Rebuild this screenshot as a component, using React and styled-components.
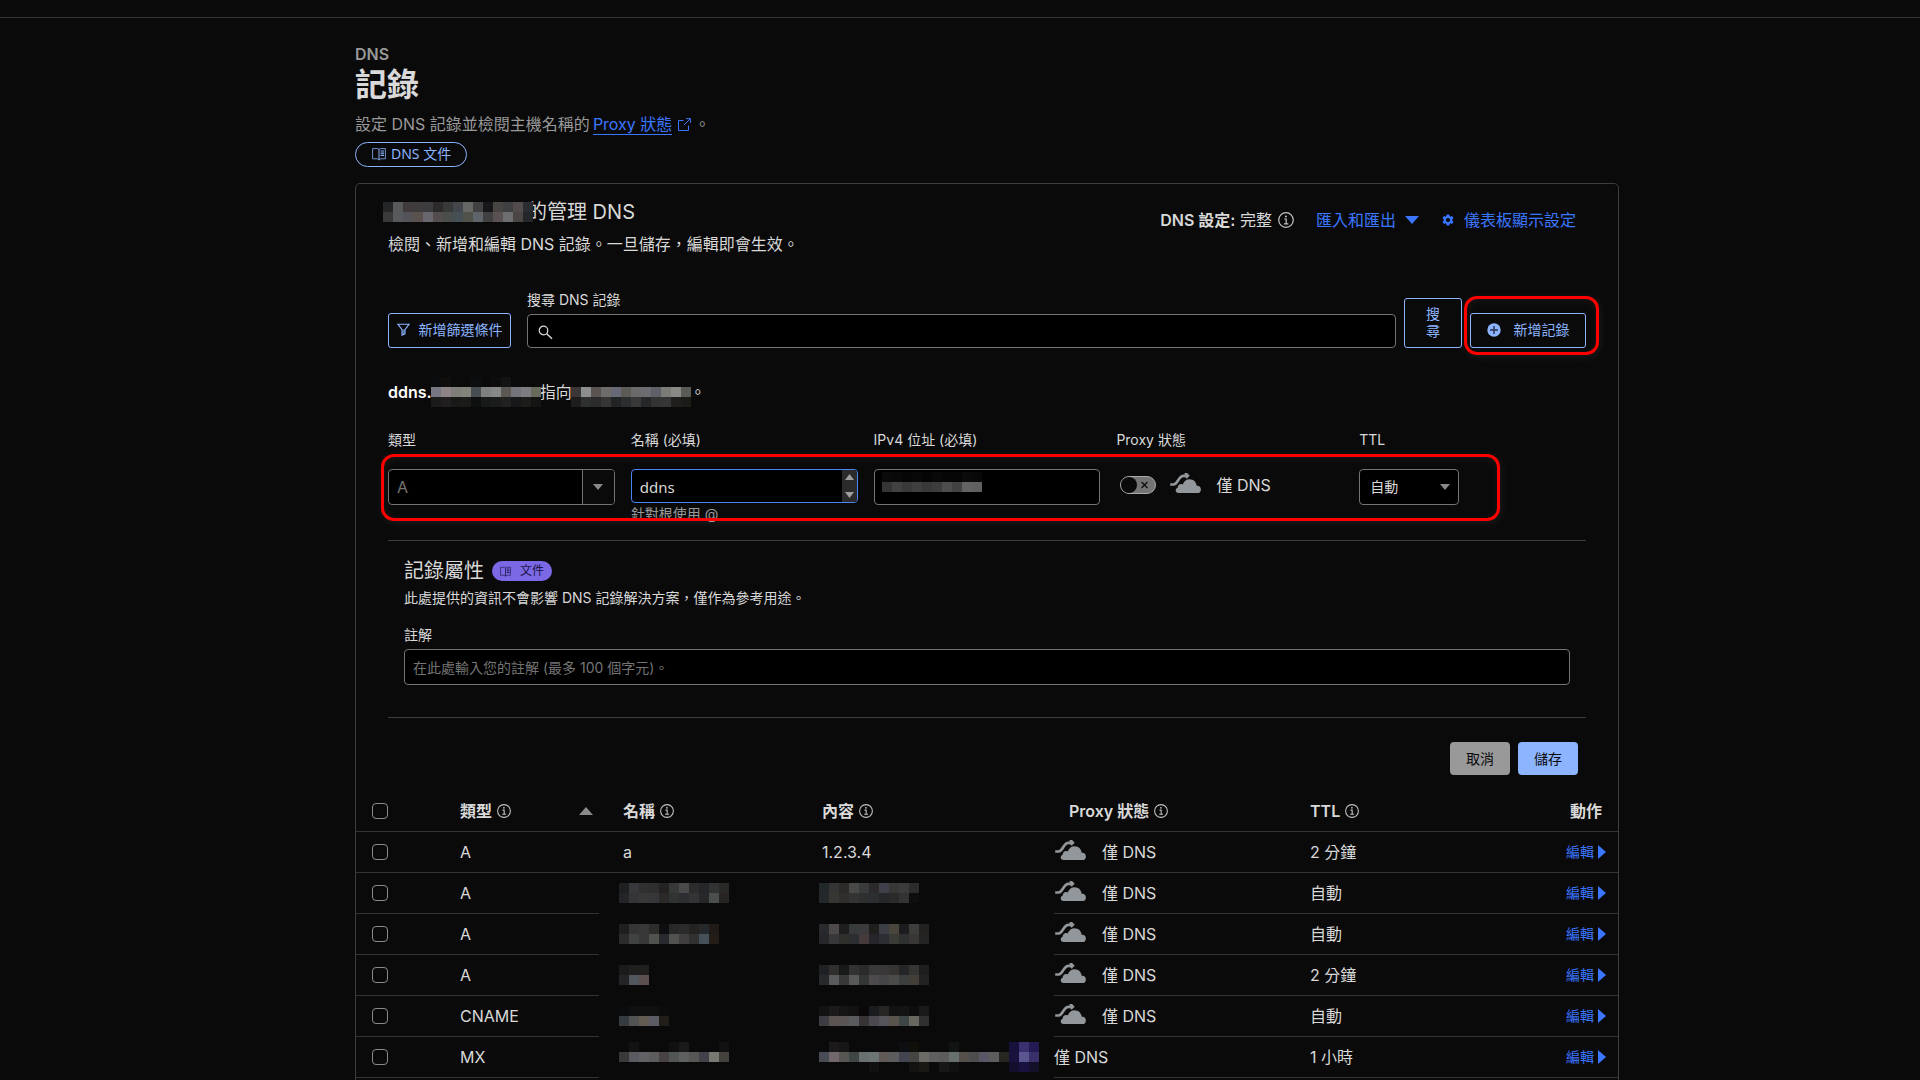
import React, { useState } from "react";
import styled, { createGlobalStyle } from "styled-components";
import { MdSettings } from "react-icons/md";

const SANS = `Inter, "Noto Sans CJK TC", sans-serif`;
const UI = `"Noto Sans", "Noto Sans CJK TC", sans-serif`;

const GlobalStyle = createGlobalStyle`
  *, *::before, *::after { box-sizing: border-box; }
  html { scrollbar-width: none; }
  body {
    margin: 0;
    background: #0a0a0a;
    color: #d9d9d9;
    font: 400 16px/24px ${SANS};
  }
  h1, h2, h3, p { margin: 0; }
  button, input, textarea, select { font: inherit; color: inherit; margin: 0; }
  svg { display: block; flex: none; }
`;

/* ---------- layout ---------- */

const TopBar = styled.header`
  height: 18px;
  border-bottom: 1px solid #333;
`;

const Page = styled.main`
  padding: 26px 0 40px 54px;
`;

const Content = styled.div`
  max-width: 1264px;
  margin: 0 auto;
`;

const Card = styled.section`
  margin-top: 16px;
  padding-bottom: 32px;
  border: 1px solid #3d3d3d;
  border-radius: 5px;
`;

const CardBody = styled.div`
  padding: 16px 32px 0;
`;

const Row = styled.div`
  display: flex;
  align-items: center;
  gap: ${p => p.$gap || 0}px;
`;

const Divider = styled.hr`
  height: 1px;
  margin: 0;
  border: 0;
  background: #3d3d3d;
`;

/* ---------- page heading ---------- */

const Eyebrow = styled.p`
  color: #999;
  font-weight: 600;
  line-height: 20px;
`;

const Title = styled.h1`
  font-size: 32px;
  font-weight: 700;
  line-height: 42px;
`;

const Lead = styled.p`
  display: flex;
  align-items: center;
  margin: 6px 0;
  color: #999;
`;

const LeadLink = styled.a`
  display: flex;
  align-items: center;
  gap: 6px;
  margin: 0 3px;
  color: #3b76ff;
  text-decoration: none;

  span {
    line-height: 20px;
    border-bottom: 1px solid;
  }
`;

const DocsLink = styled.a`
  display: flex;
  align-items: center;
  gap: 5px;
  width: fit-content;
  height: 25px;
  padding: 0 15px 2px 16px;
  border: 1px solid #8cb4ff;
  border-radius: 13px;
  color: #8cb4ff;
  font: 14px/20px ${UI};
  text-decoration: none;
`;

/* ---------- card header ---------- */

const CardHeader = styled.div`
  display: flex;
  justify-content: space-between;
  align-items: flex-start;
`;

const CardTitle = styled.h2`
  display: flex;
  align-items: center;
  margin-bottom: 8px;
  font-size: 20px;
  font-weight: 400;
  line-height: 24px;

  svg {
    position: relative;
    margin: 0 -6px 0 -5px;
  }
`;

const HeaderTools = styled.div`
  display: flex;
  align-items: center;
  gap: 22px;
  padding: 8px 10px 0 0;
`;

const Setup = styled.span`
  display: flex;
  align-items: center;
  gap: 6px;

  b {
    font-weight: 600;
  }
`;

const LinkButton = styled.button`
  display: flex;
  align-items: center;
  gap: 9px;
  padding: 0;
  border: 0;
  background: none;
  color: #3b76ff;
  cursor: pointer;
`;

/* ---------- controls ---------- */

const OutlineButton = styled.button`
  display: flex;
  align-items: center;
  justify-content: center;
  flex: none;
  gap: ${p => p.$gap || 0}px;
  width: ${p => p.$width}px;
  height: ${p => (p.$tall ? 50 : 35)}px;
  padding: ${p => (p.$tall ? "0 20px 2px" : "0 0 2px")};
  border: 1px solid #8cb4ff;
  border-radius: 3px;
  background: none;
  color: #8cb4ff;
  font-size: 14px;
  line-height: 17px;
  cursor: pointer;
`;

const SolidButton = styled.button`
  width: 60px;
  height: 33px;
  padding: 0;
  border: 0;
  border-radius: 4px;
  background: ${p => (p.$primary ? "#8cb4ff" : "#999")};
  color: #0a0a0a;
  font-size: 14px;
  line-height: 20px;
  cursor: pointer;
`;

const Label = styled.label`
  display: block;
  font-size: 14px;
  line-height: 20px;
`;

const Box = styled.div`
  display: flex;
  align-items: center;
  position: relative;
  height: ${p => p.$height || 36}px;
  border: 1px solid ${p => (p.$focused ? "#4d82f3" : "#747474")};
  border-radius: 4px;
  background: #000;
  overflow: hidden;
`;

const SearchBox = styled(Box)`
  height: 34px;
  padding: 3px 0 0 10px;
`;

const CommentBox = styled(Box)`
  margin-top: 4px;
`;

const Input = styled.input`
  flex: 1;
  min-width: 0;
  height: 100%;
  padding: 0 8px;
  border: 0;
  outline: 0;
  background: none;
  font-size: ${p => p.$size || 14}px;

  &::placeholder {
    color: #747474;
    opacity: 1;
  }

  &:disabled {
    color: #747474;
  }
`;

const NameArea = styled.textarea`
  flex: 1;
  min-width: 0;
  height: 32px;
  padding: 5px 8px;
  border: 0;
  outline: 0;
  resize: none;
  overflow: hidden;
  background: none;
  font: 15px/24px ${UI};
`;

const Steps = styled.div`
  display: flex;
  flex-direction: column;
  align-items: center;
  justify-content: space-between;
  width: 15px;
  height: 100%;
  padding: 4px 0;
  background: #2b2b2b;
`;

const ComboButton = styled.button`
  display: flex;
  align-items: center;
  justify-content: center;
  width: 32px;
  height: 100%;
  padding: 0;
  border: 0;
  border-left: 1px solid #747474;
  background: #0a0a0a;
`;

const SelectBox = styled(Box)`
  width: 100px;
  padding-right: 8px;
`;

const Select = styled.select`
  flex: 1;
  min-width: 0;
  height: 100%;
  padding: 0 10px;
  border: 0;
  outline: 0;
  appearance: none;
  background: none;
  font-size: 14px;
`;

const Toggle = styled.label`
  display: flex;
  align-items: center;
  justify-content: flex-end;
  position: relative;
  width: 36px;
  height: 18px;
  padding-right: 7px;
  border: 1px solid #aaa;
  border-radius: 9px;
  background: #747474;

  input {
    position: absolute;
    inset: 0;
    opacity: 0;
  }

  &::before {
    content: "";
    position: absolute;
    left: 0;
    width: 16px;
    height: 16px;
    border-radius: 50%;
    background: #0a0a0a;
  }
`;

const Check = styled.input`
  display: block;
  appearance: none;
  width: 16px;
  height: 16px;
  border: 1px solid #8a8a8a;
  border-radius: 4px;
`;

/* Covers the typed value of the box it sits in */
const Cover = styled.div`
  position: absolute;
  top: 2px;
  left: 7px;
`;

/* Red marker drawn over the controls it points out */
const Marker = styled.div`
  position: absolute;
  inset: ${p => p.$inset};
  border: 3px solid #f00;
  border-radius: 13px;
  box-shadow: 1px 2px 8px rgba(255, 255, 255, 0.08),
    inset 1px 2px 8px rgba(255, 255, 255, 0.06);
  pointer-events: none;
`;

/* ---------- search ---------- */

const SearchRow = styled.form`
  display: flex;
  align-items: flex-end;
  gap: 8px;
  margin-top: 34px;
`;

const SearchField = styled.div`
  flex: 1;
  margin-left: 8px;

  label {
    margin-bottom: 4px;
  }
`;

const Marked = styled.div`
  position: relative;
`;

/* ---------- record form ---------- */

const Summary = styled.p`
  display: flex;
  align-items: center;
  height: 30px;
  margin-top: 29px;

  b {
    color: #fff;
    font-weight: 600;
  }

  svg {
    position: relative;
    margin: 0 -1px;
  }
`;

const Fields = styled.div`
  position: relative;
  display: grid;
  grid-template-columns: repeat(5, minmax(0, 1fr));
  gap: 16px;
  height: 95px;
  margin: 23px 0 15px;
`;

const Field = styled.div`
  & > label:first-child,
  & > p:first-child {
    margin-bottom: 19px;
  }
`;

const FieldName = styled.p`
  font-size: 14px;
  line-height: 20px;
`;

const Hint = styled.p`
  color: #999;
  font-size: 14px;
  line-height: 22px;
`;

const ProxyCell = styled.div`
  display: flex;
  align-items: center;
  height: 32px;
  padding-left: 4px;
  gap: 14px;
`;

const Attributes = styled.div`
  padding: 16px 16px 32px;
`;

const SubTitle = styled.h3`
  font-size: 20px;
  font-weight: 400;
  line-height: 28px;
`;

const DocsBadge = styled.a`
  display: flex;
  align-items: center;
  gap: 9px;
  height: 20px;
  padding: 0 8px;
  border-radius: 10px;
  background: #7b68e4;
  color: #1c1547;
  font-size: 12px;
  line-height: 20px;
  text-decoration: none;
`;

const SubText = styled.p`
  margin-bottom: 14px;
  font-size: 14px;
  line-height: 26px;
`;

const Actions = styled.div`
  display: flex;
  justify-content: flex-end;
  gap: 8px;
  padding: 24px 8px 16px 0;
`;

/* ---------- table ---------- */

const Table = styled.table`
  width: 100%;
  table-layout: fixed;
  border-spacing: 0;
`;

const Col = styled.col`
  width: ${p => p.$width};
`;

const Cell = styled.td`
  height: 41px;
  padding: 0 0 0 ${p => p.$left || 0}px;
  border-bottom: 1px solid ${p => (p.$plain ? "transparent" : "#333")};
  text-align: left;
  vertical-align: middle;
  font-weight: 400;
  white-space: nowrap;
`;

const HeadLabel = styled.span`
  display: flex;
  align-items: center;
  gap: 5px;
  font-weight: 600;
`;

const HeadSort = styled.div`
  display: flex;
  align-items: center;
  justify-content: space-between;
  padding-right: 6px;
`;

const HeadEnd = styled(HeadLabel)`
  justify-content: flex-end;
  padding-right: 16px;
`;

const EditButton = styled.button`
  display: flex;
  align-items: center;
  gap: 4px;
  margin-left: auto;
  padding: 0 12px 0 0;
  border: 0;
  background: none;
  color: #3b76ff;
  font-size: 14px;
  cursor: pointer;
`;

/* ---------- icons ---------- */

const Triangle = ({ dir = "down", w = 12, h = 7, color = "#8a8a8a" }) => {
  const points = {
    down: `0,0 ${w},0 ${w / 2},${h}`,
    up: `0,${h} ${w},${h} ${w / 2},0`,
    right: `0,0 ${w},${h / 2} 0,${h}`
  };
  return (
    <svg width={w} height={h} aria-hidden="true">
      <polygon points={points[dir]} fill={color} />
    </svg>
  );
};

const InfoIcon = ({ size = 14 }) => (
  <svg width={size} height={size} viewBox="0 0 16 16" fill="none" stroke="#c4c4c4" aria-hidden="true">
    <circle cx="8" cy="8" r="7.3" strokeWidth="1.2" />
    <path d="M6.3 7h1.9v4.6M6 11.8h4.3" strokeWidth="1.2" />
    <circle cx="7.9" cy="4.4" r="1" fill="#c4c4c4" stroke="none" />
  </svg>
);

const ExternalIcon = () => (
  <svg width="13" height="13" viewBox="0 0 13 13" fill="none" stroke="currentColor" aria-hidden="true">
    <path d="M5.5 2.5h-5v10h10v-5M8 .6h4.4V5M12.2.8 6 7" />
  </svg>
);

const BookIcon = ({ w = 14 }) => (
  <svg width={w} height={w} viewBox="0 0 14 14" fill="none" stroke="currentColor" aria-hidden="true">
    <path d="M.6 1.6h5.2L7 2.4l1.2-.8h5.2v10.2H8.6L7 13l-1.6-1.2H.6z" opacity=".8" />
    <path d="M7 2.4V13" />
    <path d="M8.6 4h3.4M8.6 6.2h3.4M8.6 8.4h3.4" strokeWidth="1.2" />
  </svg>
);

const FunnelIcon = () => (
  <svg width="13" height="13" viewBox="0 0 13 13" fill="none" stroke="currentColor" aria-hidden="true">
    <path d="M.9 1.2h11.2L8 6.6v4.2l-3 1.4V6.6z" strokeWidth="1.1" />
    <path d="M5.2 6.6h2.6v4l-2.6 1.2z" fill="currentColor" stroke="none" opacity=".6" />
  </svg>
);

const SearchIcon = () => (
  <svg width="15" height="15" viewBox="0 0 15 15" fill="none" stroke="#d9d9d9" aria-hidden="true">
    <circle cx="5.5" cy="5.5" r="4.3" strokeWidth="1.2" />
    <path d="m8.7 8.7 5.3 5.1" strokeWidth="1.4" />
  </svg>
);

const PlusIcon = () => (
  <svg width="14" height="14" viewBox="0 0 14 14" aria-hidden="true">
    <circle cx="7" cy="7" r="6.7" fill="currentColor" />
    <path d="M7 3v8M3 7h8" stroke="#22304d" strokeWidth="1.4" />
  </svg>
);

const CrossIcon = () => (
  <svg width="7" height="8" viewBox="0 0 7 8" stroke="#0a0a0a" aria-hidden="true">
    <path d="m.5 1 6 6M6.5 1l-6 6" strokeWidth="1.2" />
  </svg>
);

const CloudIcon = () => (
  <svg width="31" height="24" viewBox="0 0 31 24" fill="#92979b" aria-hidden="true">
    <path d="M8.500 20c-3.400 0-3.700-4-.9-5.200.1-3.200 3-4.600 5.100-3.300C14 8 16.600 6.300 19.500 6.300c4 0 6.700 2.800 7.200 6.400 2.600-.3 4.200 1.500 4.200 3.700 0 2.400-1.400 3.600-3.400 3.600z" />
    <path
      d="M.2 11.500h3.400c4.400 0 4.600-8.600 10-8.600h2.400"
      fill="none"
      stroke="#92979b"
      strokeWidth="2.600"
    />
    <path d="M14.500 0h2.600l2.600 2.700-3 3.100-1.200-1z" />
  </svg>
);

/* Pixelated block standing in for a hidden value, one colour per 10px tile */
const Mosaic = ({ rows }) => {
  const tiles = rows.map(row => row.split(" "));
  const width = Math.max(...tiles.map(row => row.length)) * 10;
  return (
    <svg width={width} height={rows.length * 10} shapeRendering="crispEdges" aria-hidden="true">
      {tiles.map((row, y) =>
        row.map((color, x) =>
          color === "-" ? null : (
            <rect key={`${x}-${y}`} x={x * 10} y={y * 10} width="10" height="10" fill={`#${color}`} />
          )
        )
      )}
    </svg>
  );
};

/* ---------- data ---------- */

const ZONE = [
  "252628 58595c 413a3d 3f3c3e 3c3c3e 2c2b2a 383a39 43474b 666863 414143 171719 484441 3f4042 524d4c 2a2d31",
  "3a3a3a 58595d 545359 5a504e 68676f 534e4d 4a4d49 445055 505249 5f636a 404042 5c5152 6b6f71 4b4643 25262a"
];

const HOST = [
  "0b0c0d 100d0d - - 0c0d0f - 0f0d0c 121312 - - -",
  "777783 8e8488 7f7e78 82837a 484d51 7e807d 868987 5b5853 74737a 7d7c80 696a5e",
  "1b1b1c 201e1f 191918 1b1b1a 0d100f 181a19 1b1c1c 202120 18181a 1c1c1b 141413"
];

const TARGET = [
  "-",
  "3b3736 8d8e90 5b5351 6d6c6b 676976 5d5b58 6b6a6a 6d6d71 5f6168 7b7b77 898985 5b5a56",
  "1d1d1d 2e302f 2b2b2b 353535 222325 2c2d2e 383838 262728 333333 353535 201f1d 1b1b18"
];

const ADDRESS = [
  "0a0a0a 090909 060606 080808 050505 080808 060606 050505 0a0a0a 080808",
  "353535 424242 393939 3f3f3f 383838 3d3d3d 4d4d4d 424242 636363 606060"
];

const COLUMNS = ["88px", "155px", "207px", "248px", "240px", "160px", "auto"];

const RECORDS = [
  { type: "A", name: "a", content: "1.2.3.4", ttl: "2 分鐘" },
  {
    type: "A",
    ttl: "自動",
    name: [
      "1f2022 37383b 303031 2e2e2f 242321 363938 4a4a4a 2c2c2c 252629 313333 292928",
      "242528 353538 393838 37373a 2b2a29 303332 2c2e31 343436 272629 4a4e4d 282421"
    ],
    content: [
      "22272a 343434 2d2b2a 484a48 3a3b3c 2b292a 40404a 393736 3a3b3d 2c2c2c",
      "24282a 363633 302f2e 343434 2e2f2f 2c2f31 25272b 2b2a2a 333332 0e0e0e"
    ]
  },
  {
    type: "A",
    ttl: "自動",
    name: [
      "1e1f20 353535 383838 2e2d2b 0e0f11 282829 2b2b2b 242321 25292b 201b18",
      "2a2b2a 414342 383738 50534e 292a2f 51514f 413e3f 313131 465059 241c17"
    ],
    content: [
      "282a2e 4d4a49 1e1e1e 373b3b 3c3a3c 211f1e 3c3e46 49453d 1d1d1f 3d3d3b 232221",
      "26262b 38383a 2f2f2b 2c2f32 453b3a 26262a 2c2d33 3a3b37 2f3030 383735 242424"
    ]
  },
  {
    type: "A",
    ttl: "2 分鐘",
    name: ["1b1b1c 202021 201f1e", "242427 50575e 5b504d"],
    content: [
      "202124 302f2e 181919 323232 2b2b2b 393939 393737 363433 252628 353534 1e1e1e",
      "28292b 5a5b5c 383838 5a5959 343535 4c4a4c 454548 4b4b49 3d3e3e 443e38 222222"
    ]
  },
  {
    type: "CNAME",
    ttl: "自動",
    name: ["0b0c0d 101010 101010 101010 0c0c0c", "363b40 535354 625c53 5b5c66 211d18"],
    content: [
      "121212 1c1a1b 141414 121212 0a0808 1b1c20 272624 121212 141414 0d0d0d 191919",
      "3c3c42 5a5352 595554 5a5b5f 383435 4b4850 54545a 58534d 3f4746 686861 303030"
    ]
  },
  {
    type: "MX",
    ttl: "1 小時",
    bare: true,
    name: [
      "- 131313 - - - 101010 191919 - - - 111111",
      "393939 5a5b60 626165 5c5c5f 484243 515654 5d605e 575756 43424a 767872 45423d",
      "-"
    ],
    content: [
      "- 1b1919 161616 - - - - - 0d0e12 100f0a - - - 121413 - - - - - 17123c 3b3070 241b55",
      "484b56 72686b 575653 404645 697070 6d7475 605956 5b5c5d 434451 454543 6b6a67 605f5f 5d5c5b 68706f 555049 4c4d4c 575766 5d5d5e 272620 19123f 5a5790 3a316c",
      "- - - - - 101110 - - - 131211 1a1813 - 171718 101010 - - - - - 120e2b 191140 13102a"
    ]
  }
];

const Value = ({ value }) => (Array.isArray(value) ? <Mosaic rows={value} /> : value);

const RecordRow = ({ record }) => {
  const hidden = Array.isArray(record.name);
  return (
    <tr>
      <Cell $left={16}>
        <Check type="checkbox" aria-label={`選取 ${record.type}`} />
      </Cell>
      <Cell $left={16}>{record.type}</Cell>
      <Cell $left={hidden ? 20 : 24} $plain={hidden}>
        <Value value={record.name} />
      </Cell>
      <Cell $left={hidden ? 13 : 16} $plain={hidden}>
        <Value value={record.content} />
      </Cell>
      <Cell $left={record.bare ? 0 : 1}>
        <Row $gap={16}>
          {!record.bare && <CloudIcon />}
          僅 DNS
        </Row>
      </Cell>
      <Cell $left={16}>{record.ttl}</Cell>
      <Cell>
        <EditButton type="button">
          編輯 <Triangle dir="right" w={8} h={14} color="#3b76ff" />
        </EditButton>
      </Cell>
    </tr>
  );
};

const RecordForm = () => {
  const [name, setName] = useState("ddns");

  return (
    <>
      <Summary>
        <b>{name}.</b>
        <Mosaic rows={HOST} />
        指向
        <Mosaic rows={TARGET} />。
      </Summary>

      <Fields>
        <Field>
          <Label htmlFor="type">類型</Label>
          <Box>
            <Input id="type" $size={16} value="A" disabled />
            <ComboButton type="button" aria-label="類型">
              <Triangle w={10} h={6} />
            </ComboButton>
          </Box>
        </Field>
        <Field>
          <Label htmlFor="name">名稱 (必填)</Label>
          <Box $height={34} $focused>
            <NameArea id="name" rows={1} value={name} onChange={e => setName(e.target.value)} />
            <Steps>
              <Triangle dir="up" w={9} h={6} color="#9f9f9f" />
              <Triangle w={9} h={6} color="#9f9f9f" />
            </Steps>
          </Box>
          <Hint>針對根使用 @</Hint>
        </Field>
        <Field>
          <Label htmlFor="address">IPv4 位址 (必填)</Label>
          <Box>
            <Input id="address" />
            <Cover>
              <Mosaic rows={ADDRESS} />
            </Cover>
          </Box>
        </Field>
        <Field>
          <FieldName>Proxy 狀態</FieldName>
          <ProxyCell>
            <Toggle>
              <input type="checkbox" aria-label="Proxy 狀態" />
              <CrossIcon />
            </Toggle>
            <Row $gap={15}>
              <CloudIcon />
              僅 DNS
            </Row>
          </ProxyCell>
        </Field>
        <Field>
          <Label htmlFor="ttl">TTL</Label>
          <SelectBox>
            <Select id="ttl">
              <option>自動</option>
            </Select>
            <Triangle w={10} h={6} />
          </SelectBox>
        </Field>
        <Marker $inset="24px 86px 4px -7px" />
      </Fields>

      <Divider />

      <Attributes>
        <Row $gap={8}>
          <SubTitle>記錄屬性</SubTitle>
          <DocsBadge href="#docs">
            <BookIcon w={11} />
            文件
          </DocsBadge>
        </Row>
        <SubText>此處提供的資訊不會影響 DNS 記錄解決方案，僅作為參考用途。</SubText>
        <Label htmlFor="comment">註解</Label>
        <CommentBox>
          <Input id="comment" placeholder="在此處輸入您的註解 (最多 100 個字元)。" />
        </CommentBox>
      </Attributes>

      <Divider />

      <Actions>
        <SolidButton type="button">取消</SolidButton>
        <SolidButton type="button" $primary>
          儲存
        </SolidButton>
      </Actions>
    </>
  );
};

const App = () => (
  <>
    <GlobalStyle />
    <TopBar />
    <Page>
      <Content>
        <Eyebrow>DNS</Eyebrow>
        <Title>記錄</Title>
        <Lead>
          設定 DNS 記錄並檢閱主機名稱的
          <LeadLink href="#proxy">
            <span>Proxy 狀態</span>
            <ExternalIcon />
          </LeadLink>
          。
        </Lead>
        <DocsLink href="#docs">
          <BookIcon /> DNS 文件
        </DocsLink>

        <Card>
          <CardBody>
            <CardHeader>
              <div>
                <CardTitle>
                  <Mosaic rows={ZONE} />
                  的管理 DNS
                </CardTitle>
                <p>檢閱、新增和編輯 DNS 記錄。一旦儲存，編輯即會生效。</p>
              </div>
              <HeaderTools>
                <Setup>
                  <span>
                    <b>DNS 設定:</b> 完整
                  </span>
                  <InfoIcon size={16} />
                </Setup>
                <LinkButton type="button">
                  匯入和匯出
                  <Triangle w={14} h={8} color="#3b76ff" />
                </LinkButton>
                <LinkButton type="button">
                  <MdSettings size={14} />
                  儀表板顯示設定
                </LinkButton>
              </HeaderTools>
            </CardHeader>

            <SearchRow>
              <OutlineButton type="button" $width={123} $gap={9}>
                <FunnelIcon />
                新增篩選條件
              </OutlineButton>
              <SearchField>
                <Label htmlFor="search">搜尋 DNS 記錄</Label>
                <SearchBox>
                  <SearchIcon />
                  <Input id="search" />
                </SearchBox>
              </SearchField>
              <OutlineButton type="button" $width={58} $tall>
                搜尋
              </OutlineButton>
              <Marked>
                <OutlineButton type="button" $width={116} $gap={13}>
                  <PlusIcon />
                  新增記錄
                </OutlineButton>
                <Marker $inset="-17px -13px -7px -6px" />
              </Marked>
            </SearchRow>

            <RecordForm />
          </CardBody>

          <Table>
            <colgroup>
              {COLUMNS.map((width, i) => (
                <Col key={i} $width={width} />
              ))}
            </colgroup>
            <thead>
              <tr>
                <Cell as="th" $left={16}>
                  <Check type="checkbox" aria-label="全選" />
                </Cell>
                <Cell as="th" $left={16}>
                  <HeadSort>
                    <HeadLabel>
                      類型 <InfoIcon />
                    </HeadLabel>
                    <Triangle dir="up" w={14} h={8} />
                  </HeadSort>
                </Cell>
                <Cell as="th" $left={24}>
                  <HeadLabel>
                    名稱 <InfoIcon />
                  </HeadLabel>
                </Cell>
                <Cell as="th" $left={16}>
                  <HeadLabel>
                    內容 <InfoIcon />
                  </HeadLabel>
                </Cell>
                <Cell as="th" $left={15}>
                  <HeadLabel>
                    Proxy 狀態 <InfoIcon />
                  </HeadLabel>
                </Cell>
                <Cell as="th" $left={16}>
                  <HeadLabel>
                    TTL <InfoIcon />
                  </HeadLabel>
                </Cell>
                <Cell as="th">
                  <HeadEnd>動作</HeadEnd>
                </Cell>
              </tr>
            </thead>
            <tbody>
              {RECORDS.map((record, i) => (
                <RecordRow key={i} record={record} />
              ))}
            </tbody>
          </Table>
        </Card>
      </Content>
    </Page>
  </>
);

export default App;
